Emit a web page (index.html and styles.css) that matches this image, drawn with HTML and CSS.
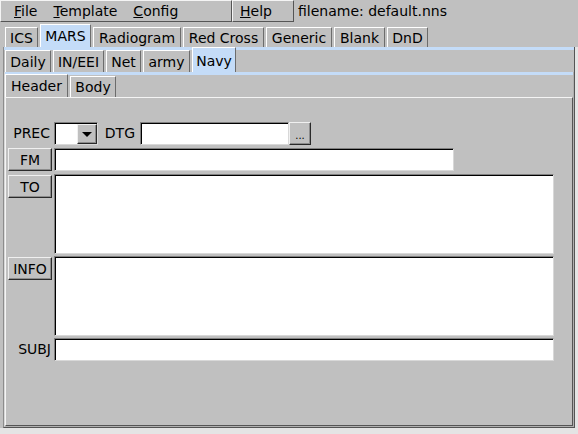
FILE: index.html
```html
<!DOCTYPE html>
<html>
<head>
<meta charset="utf-8">
<title>flmsg</title>
<link rel="stylesheet" href="styles.css">
</head>
<body>
<div class="topbar">
  <div class="menubar">
    <span class="mi"><u>F</u>ile</span>
    <span class="mi"><u>T</u>emplate</span>
    <span class="mi"><u>C</u>onfig</span>
  </div>
  <div class="helpbar"><span class="mi"><u>H</u>elp</span></div>
  <div class="fname">filename: default.nns</div>
</div>
<div class="main">
  <div class="tabrow r1">
    <div class="tab t-ics">ICS</div>
    <div class="tab sel t-mars">MARS</div>
    <div class="tab t-radio">Radiogram</div>
    <div class="tab t-red">Red Cross</div>
    <div class="tab t-gen">Generic</div>
    <div class="tab t-blank">Blank</div>
    <div class="tab t-dnd">DnD</div>
  </div>
  <div class="p1wrap">
    <div class="panel p1">
      <div class="tabrow r2">
        <div class="tab t-daily">Daily</div>
        <div class="tab t-ineei">IN/EEI</div>
        <div class="tab t-net">Net</div>
        <div class="tab t-army">army</div>
        <div class="tab sel t-navy">Navy</div>
      </div>
      <div class="panel p2">
        <div class="tabrow r3">
          <div class="tab sel2 t-header">Header</div>
          <div class="tab t-body">Body</div>
        </div>
        <div class="panel p3">
          <div class="form">
            <div class="row r-prec">
              <div class="lbl">PREC</div>
              <div class="choice">
                <div class="choice-val"></div>
                <div class="choice-btn"><span class="tri"></span></div>
              </div>
              <div class="lbl lbl-dtg">DTG</div>
              <div class="field f-dtg"></div>
              <div class="btn b-dots">...</div>
            </div>
            <div class="row r-fm">
              <div class="btn b-lab">FM</div>
              <div class="field f-fm"></div>
            </div>
            <div class="row r-to">
              <div class="btn b-lab">TO</div>
              <div class="field f-area"></div>
            </div>
            <div class="row r-info">
              <div class="btn b-lab">INFO</div>
              <div class="field f-area"></div>
            </div>
            <div class="row r-subj">
              <div class="lbl lbl-subj">SUBJ</div>
              <div class="field f-subj"></div>
            </div>
          </div>
        </div>
      </div>
    </div>
    <div class="rstrip"></div>
  </div>
  <div class="bstrip"></div>
</div>
</body>
</html>
```

FILE: styles.css
```css
* { box-sizing: border-box; }
html, body { margin: 0; padding: 0; }
body {
  width: 578px;
  height: 434px;
  overflow: hidden;
  background: #c0c0c0;
  font-family: "DejaVu Sans", sans-serif;
  font-size: 14px;
  color: #000;
}

/* ---------- top menu bar ---------- */
.topbar { display: flex; height: 22px; }
.menubar {
  width: 232px;
  display: flex;
  padding-left: 5px;
  border: 1px solid;
  border-color: #f4f4f4 #555 #555 #f4f4f4;
}
.helpbar {
  width: 62px;
  display: flex;
  padding-left: 7px;
  border: 1px solid;
  border-color: #f4f4f4 #555 #555 #f4f4f4;
}
.mi { padding: 0 8px; line-height: 20px; white-space: nowrap; }
.helpbar .mi { padding: 0; }
.mi u { text-underline-offset: 1px; }
.fname { padding-left: 4px; line-height: 22px; white-space: nowrap; }

/* ---------- tabs ---------- */
.main { padding-top: 2px; }
.tabrow { display: flex; align-items: flex-end; gap: 2px; background: #c0c0c0; }
.tab {
  display: flex;
  align-items: center;
  justify-content: center;
  white-space: nowrap;
  background: #c0c0c0;
  border-left: 1px solid #fff;
  border-top: 1px solid #fff;
  border-right: 1px solid #6c6c6c;
}
.tab.sel { background: #c4dcf8; }

.r1 { height: 23px; margin-left: 5px; }
.r1 .tab { height: 20px; }
.r1 .tab.sel { height: 23px; }
.t-ics { width: 33px; }
.t-mars { width: 51px; }
.t-radio { width: 88px; }
.t-red { width: 81px; }
.t-gen { width: 66px; }
.t-blank { width: 51px; }
.t-dnd { width: 41px; }

.r2 { height: 22px; padding-left: 1px; }
.r2 .tab { height: 22px; }
.r2 .tab.sel { height: 25px; padding-top: 2px; }
.t-daily { width: 46px; }
.t-ineei { width: 51px; }
.t-net { width: 35px; }
.t-army { width: 47px; }
.t-navy { width: 44px; }

.r3 { height: 22px; }
.r3 .tab { height: 21px; }
.r3 .tab.sel2 { height: 23px; }
.t-header { width: 63px; }
.t-body { width: 46px; }

/* ---------- nested panels ---------- */
.p1wrap { display: flex; }
.rstrip { flex: 1; background: #e4e4e4; }
.bstrip { height: 6px; background: #e4e4e4; }
.panel { background: #c4dcf8; }
.p1 {
  margin-left: 3px;
  width: 572px;
  padding-top: 3px;
  border-left: 1px solid #8c8c8c;
  border-right: 1px solid #555;
  border-bottom: 1px solid #555;
}
.p2 {
  margin-top: 0;
  padding-top: 3px;
  border-left: 1px solid #d8d8d8;
  border-right: 1px solid #b0b0b0;
  border-bottom: 1px solid #b0b0b0;
}
.p3 {
  height: 329px;
  background: #c0c0c0;
  border: 1px solid;
  border-color: #f4f4f4 #555 #555 #f4f4f4;
}

/* ---------- form ---------- */
.form { display: flex; flex-direction: column; padding-top: 24px; }
.row { display: flex; align-items: flex-start; }
.lbl {
  width: 48px;
  height: 23px;
  line-height: 23px;
  text-align: right;
  padding-right: 4px;
  white-space: nowrap;
}
.lbl-dtg { width: 42px; padding-right: 5px; }
.lbl-subj { padding-right: 3px; }

.field {
  background: #fff;
  height: 23px;
  border: 1px solid;
  border-color: #808080 #d8d8d8 #d8d8d8 #808080;
  box-shadow: inset 1px 1px 0 #000;
}
.f-dtg { width: 149px; }
.f-fm { width: 400px; margin-left: 2px; }
.f-area { width: 500px; height: 80px; margin-left: 2px; }
.f-subj { width: 500px; }

.btn {
  height: 23px;
  display: flex;
  align-items: center;
  justify-content: center;
  background: #c0c0c0;
  border: 1px solid;
  border-color: #f0f0f0 #2a2a2a #2a2a2a #f0f0f0;
  box-shadow: inset -1px -1px 0 #8c8c8c;
  white-space: nowrap;
}
.b-lab { width: 44px; margin-left: 2px; }
.r-to .b-lab, .r-info .b-lab { margin-top: 1px; }
.b-dots { width: 22px; font-size: 10px; padding-top: 4px; letter-spacing: 0; }

.choice {
  width: 44px;
  height: 23px;
  display: flex;
  background: #fff;
  border: 1px solid;
  border-color: #808080 #d8d8d8 #d8d8d8 #808080;
  box-shadow: inset 1px 1px 0 #000;
  padding: 1px 0 0 1px;
}
.choice-val { flex: 1; }
.choice-btn {
  width: 20px;
  display: flex;
  align-items: center;
  justify-content: center;
  background: #c0c0c0;
  border: 1px solid;
  border-color: #f0f0f0 #2a2a2a #2a2a2a #f0f0f0;
  box-shadow: inset -1px -1px 0 #8c8c8c;
}
.tri {
  width: 0;
  height: 0;
  border-left: 5px solid transparent;
  border-right: 5px solid transparent;
  border-top: 5px solid #000;
}

.r-prec { margin-top: 0; }
.r-fm { margin-top: 3px; }
.r-to { margin-top: 3px; }
.r-info { margin-top: 2px; }
.r-subj { margin-top: 2px; }
```
